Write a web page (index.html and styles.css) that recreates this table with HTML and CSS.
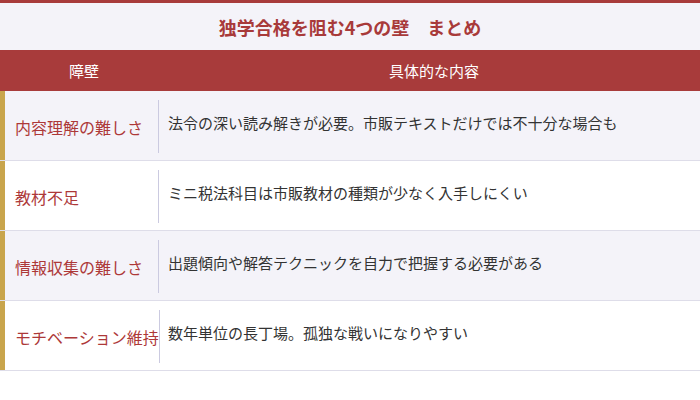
FILE: index.html
```html
<!DOCTYPE html>
<html lang="ja">
<head>
<meta charset="utf-8">
<link rel="stylesheet" href="styles.css">
</head>
<body>
<div class="page">
  <h1 class="title">独学合格を阻む4つの壁　まとめ</h1>
  <div class="table">
    <div class="thead">
      <div class="th c1">障壁</div>
      <div class="th c2">具体的な内容</div>
    </div>
    <div class="row alt">
      <div class="name"><div class="name-in">内容理解の難しさ</div></div>
      <div class="desc">法令の深い読み解きが必要。市販テキストだけでは不十分な場合も</div>
    </div>
    <div class="row">
      <div class="name"><div class="name-in">教材不足</div></div>
      <div class="desc">ミニ税法科目は市販教材の種類が少なく入手しにくい</div>
    </div>
    <div class="row alt">
      <div class="name"><div class="name-in">情報収集の難しさ</div></div>
      <div class="desc">出題傾向や解答テクニックを自力で把握する必要がある</div>
    </div>
    <div class="row">
      <div class="name"><div class="name-in">モチベーション維持</div></div>
      <div class="desc">数年単位の長丁場。孤独な戦いになりやすい</div>
    </div>
  </div>
</div>
</body>
</html>
```
FILE: styles.css
```css
* { box-sizing: border-box; }
html, body { margin: 0; padding: 0; background: #ffffff; }
body {
  font-family: "Noto Sans CJK JP", "Noto Sans", sans-serif;
  width: 700px;
  height: 400px;
  overflow: hidden;
}
.page {
  border-top: 3px solid #a83b3b;
}
.title {
  margin: 0;
  height: 47px;
  display: flex;
  align-items: center;
  justify-content: center;
  background: #f4f3f9;
  color: #a83a3a;
  font-size: 18px;
  font-weight: 700;
}
.thead {
  display: flex;
  height: 41px;
  background: #a83b3b;
  color: #ffffff;
  font-size: 15px;
}
.th {
  display: flex;
  align-items: center;
  justify-content: center;
}
.c1 { width: 168px; }
.c2 { flex: 1; }
.row {
  display: flex;
  height: 70px;
  background: #ffffff;
  border-bottom: 1px solid #dedde9;
}
.row.alt { background: #f4f3f9; }
.name {
  width: 168px;
  flex: none;
  display: flex;
  border-left: 5px solid #c9a54c;
  padding: 9px 9px 7px 0;
}
.name-in {
  flex: 1;
  display: flex;
  align-items: center;
  padding-left: 10px;
  border-right: 1px solid #cbcae0;
  color: #ad3838;
  font-size: 16px;
  white-space: nowrap;
  padding-top: 1px;
}
.desc {
  flex: 1;
  display: flex;
  align-items: center;
  padding-bottom: 7px;
  color: #333333;
  font-size: 15px;
  white-space: nowrap;
}
```
